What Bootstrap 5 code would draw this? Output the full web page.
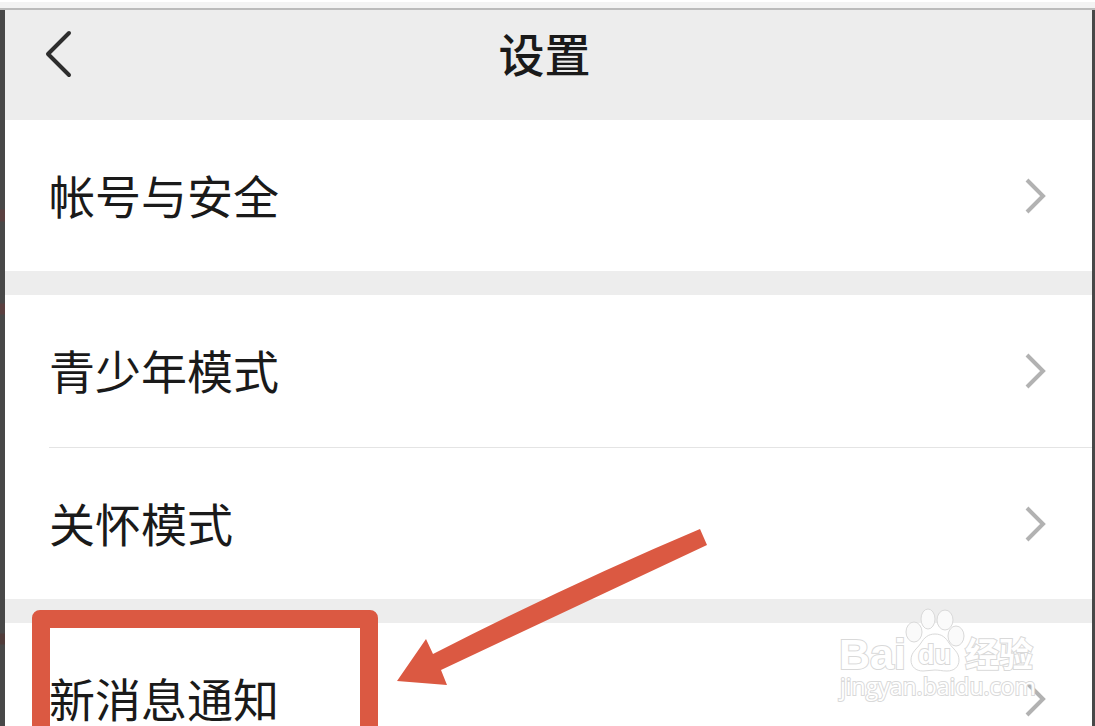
<!DOCTYPE html>
<html lang="zh-CN">
<head>
<meta charset="utf-8">
<meta name="viewport" content="width=device-width, initial-scale=1">
<title>设置</title>
<link href="https://cdn.jsdelivr.net/npm/bootstrap@5.3.0/dist/css/bootstrap.min.css" rel="stylesheet">
<style>
body { font-family: "Liberation Sans", "Noto Sans CJK SC", sans-serif; background: #fff; color: #1a1a1a; }
.window-edge { height: 10px; background: #f3f3f3; border-top: 2px solid #fff; border-bottom: 2px solid #bbb; }
.backdrop-strip { background: #484848; }
.strip-start { width: 5px; background: linear-gradient(#484848 199px, #5a4040 200px, #5a4040 211px, #484848 212px, #484848 293px, #5a4040 294px, #5a4040 304px, #484848 305px, #484848 623px, #503c3a 624px, #503c3a 634px, #484848 635px); }
.strip-end { width: 3px; }
.screen { background: #ededed; }
.title-bar { height: 110px; padding: 0 48px 20px 40px; }
.title-bar h1 { font-size: 46px; line-height: 60px; font-weight: 500; padding-top: 2px; }
.title-bar svg { width: 32px; height: 50px; }
.back-btn { width: 60px; }
.settings-group { background: #fff; margin-bottom: 24px; }
.settings-row { height: 151px; padding: 0 45px 0 44px; font-size: 46px; line-height: 60px; color: #1a1a1a; }
.settings-row span { padding-top: 4px; }
.settings-row svg { width: 22px; height: 36px; }
.row-divider { height: 2px; margin-left: 44px; border-bottom: 1px solid #e4e4e4; }
.highlight-frame { left: 27px; top: -13px; width: 346px; height: 190px; border: 18px solid #db5942; border-radius: 8px; }
.pointer-arrow { left: 392px; top: -94px; }
.watermark { right: 52px; top: -18px; }
.watermark text { paint-order: stroke; stroke-width: 2px; }
.pass { pointer-events: none; }
</style>
</head>
<body>
<div class="d-flex flex-column vh-100 overflow-hidden">
  <div class="window-edge flex-shrink-0"></div>
  <div class="d-flex flex-grow-1">
    <div class="backdrop-strip strip-start flex-shrink-0"></div>
    <main class="screen flex-grow-1">
      <header class="title-bar d-flex align-items-center justify-content-between">
        <button type="button" class="back-btn btn p-0 border-0 text-start" aria-label="返回">
          <svg viewBox="0 0 32 50" fill="none" stroke="#2d2d2d" stroke-width="4" stroke-linecap="round" stroke-linejoin="round"><path d="M24 3 3 24 24 45"/></svg>
        </button>
        <h1 class="m-0">设置</h1>
        <span class="back-btn"></span>
      </header>

      <section class="settings-group">
        <a href="#account" class="settings-row d-flex align-items-center justify-content-between text-decoration-none">
          <span>帐号与安全</span>
          <svg viewBox="0 0 22 36" fill="none" stroke="#b2b2b2" stroke-width="4"><path d="M2 2 18 18 2 34"/></svg>
        </a>
      </section>

      <section class="settings-group">
        <a href="#teen" class="settings-row d-flex align-items-center justify-content-between text-decoration-none">
          <span>青少年模式</span>
          <svg viewBox="0 0 22 36" fill="none" stroke="#b2b2b2" stroke-width="4"><path d="M2 2 18 18 2 34"/></svg>
        </a>
        <div class="row-divider"></div>
        <a href="#care" class="settings-row d-flex align-items-center justify-content-between text-decoration-none">
          <span>关怀模式</span>
          <svg viewBox="0 0 22 36" fill="none" stroke="#b2b2b2" stroke-width="4"><path d="M2 2 18 18 2 34"/></svg>
        </a>
      </section>

      <section class="settings-group position-relative">
        <div class="highlight-frame position-absolute pass"></div>
        <a href="#notify" class="settings-row position-relative d-flex align-items-center justify-content-between text-decoration-none">
          <span>新消息通知</span>
          <svg viewBox="0 0 22 36" fill="none" stroke="#b2b2b2" stroke-width="4"><path d="M2 2 18 18 2 34"/></svg>
        </a>
        <svg class="pointer-arrow position-absolute pass" width="312" height="158" viewBox="0 0 312 158" aria-hidden="true"><path fill="#db5942" d="M303 0 310 16 44 141 50 156 0 152 29 110 36 125Q175 54 303 0Z"/></svg>
        <svg class="watermark position-absolute pass" width="204" height="104" viewBox="0 0 204 104" fill="#fff" stroke="#d9d9d9">
          <text x="3" y="64" font-family="Liberation Sans, sans-serif" font-weight="700" font-size="43">Bai</text>
          <g fill="#fafafa">
            <ellipse cx="78" cy="27" rx="8" ry="10"/>
            <ellipse cx="92" cy="14" rx="7" ry="10"/>
            <ellipse cx="109" cy="15" rx="8" ry="10"/>
            <ellipse cx="120" cy="31" rx="8" ry="10"/>
            <path fill="#fff" d="M99 29c7 0 11 4 14 9 4 6 10 9 10 17 0 7-5 11-12 11-5 0-8-1-12-1s-8 1-12 1c-7 0-12-4-12-11 0-8 6-11 10-17 3-5 7-9 14-9Z"/>
          </g>
          <text x="82" y="59" font-family="Liberation Sans, sans-serif" font-weight="700" font-size="27">du</text>
          <text x="129" y="62" font-family="Noto Sans CJK SC, sans-serif" font-weight="700" font-size="34">经验</text>
          <text x="4" y="90" font-family="Open Sans, sans-serif" font-size="23">jingyan.baidu.com</text>
        </svg>
      </section>
    </main>
    <div class="backdrop-strip strip-end flex-shrink-0"></div>
  </div>
</div>
<script src="https://cdn.jsdelivr.net/npm/bootstrap@5.3.0/dist/js/bootstrap.bundle.min.js"></script>
</body>
</html>
